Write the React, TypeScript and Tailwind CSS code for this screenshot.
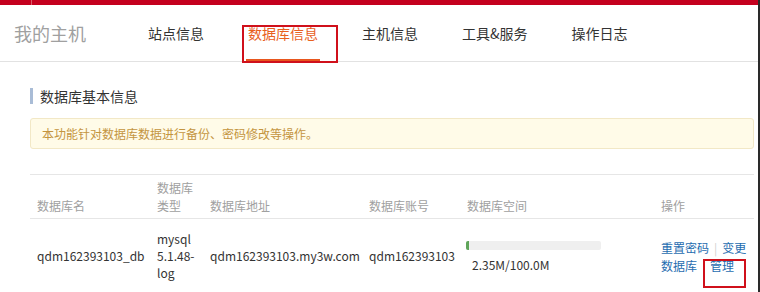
import React from "react";

const navItems = ["站点信息", "数据库信息", "主机信息", "工具&服务", "操作日志"];

export default function App() {
  return (
    <div className="w-[760px] h-[292px] overflow-hidden bg-white border-r-2 border-[#2a2a2a] font-['Noto_Sans_CJK_SC',sans-serif] flex flex-col">
      <div className="h-[5px] shrink-0 flex bg-[#c4001e]">
        <div className="w-[32px] border-r border-[#d95a68]" />
      </div>
      <div className="h-[57px] shrink-0 flex items-center border-b border-[#e2e2e2]">
        <div className="pl-[14px] text-[18px] text-[#a0a0a0] leading-none">我的主机</div>
        <div className="ml-[62px] flex gap-[44px] h-full">
          {navItems.map((t, i) => (
            <div key={t} className="relative h-full flex items-center">
              <span className={"text-[14px] leading-none " + (i === 1 ? "text-[#e8601e]" : "text-[#333]")}>{t}</span>
              {i === 1 && (
                <>
                  <div className="absolute bottom-[-1px] left-[-2px] right-[-2px] h-[3px] bg-[#e8561e]" />
                  <div className="absolute left-[-6px] top-[20px] w-[96px] h-[38px] border-2 border-[#d0101b]" />
                </>
              )}
            </div>
          ))}
        </div>
      </div>
      <div className="pl-[30px] pr-[4px] flex flex-col">
        <div className="mt-[26px] h-[16px] border-l-[3px] border-[#a9bcd6] pl-[7px] text-[14px] leading-[16px] text-[#333]">
          数据库基本信息
        </div>
        <div className="mt-[14px] h-[31px] bg-[#fffbe8] border border-[#f2e8c6] rounded-[3px] px-[11px] text-[12px] leading-[29px] text-[#c4953f]">
          本功能针对数据库数据进行备份、密码修改等操作。
        </div>
        <div className="mt-[25px] border-t border-[#e6e6e6]">
          <div className="grid grid-cols-[120px_53px_159px_98px_194px_100px] h-[44px] border-b border-[#e6e6e6] text-[12px] leading-[18px] text-[#a0a0a0] items-end">
            <div className="pl-[7px] pb-[3px]">数据库名</div>
            <div className="pl-[7px] pb-[3px]">数据库<br />类型</div>
            <div className="pl-[7px] pb-[3px]">数据库地址</div>
            <div className="pl-[7px] pb-[3px]">数据库账号</div>
            <div className="pl-[7px] pb-[3px]">数据库空间</div>
            <div className="pl-[7px] pb-[3px]">操作</div>
          </div>
          <div className="grid grid-cols-[120px_53px_159px_98px_194px_100px] h-[76px] pb-[3px] text-[12px] leading-[17px] text-[#333] items-center">
            <div className="pl-[7px]">qdm162393103_db</div>
            <div className="pl-[7px]">mysql<br />5.1.48-<br />log</div>
            <div className="pl-[7px]">qdm162393103.my3w.com</div>
            <div className="pl-[7px]">qdm162393103</div>
            <div className="pl-[6px] flex flex-col pt-[3px]">
              <div className="w-[135px] h-[9px] bg-[#efefef] rounded-[2px] overflow-hidden">
                <div className="w-[3px] h-full bg-[#5fa55a]" />
              </div>
              <div className="pl-[6px] mt-[6px] leading-[18px]">2.35M/100.0M</div>
            </div>
            <div className="pl-[7px] leading-[18px] text-[#1f6db0] pt-[3px]">
              <div className="flex items-center">
                <span>重置密码</span>
                <span className="mx-[5px] text-[#cfcfcf]">|</span>
                <span>变更</span>
              </div>
              <div className="flex items-center">
                <span>数据库</span>
                <span className="relative ml-[13px]">
                  管理
                  <span className="absolute left-[-7px] top-[2px] w-[43px] h-[29px] border-2 border-[#d0101b]" />
                </span>
              </div>
            </div>
          </div>
        </div>
      </div>
    </div>
  );
}
